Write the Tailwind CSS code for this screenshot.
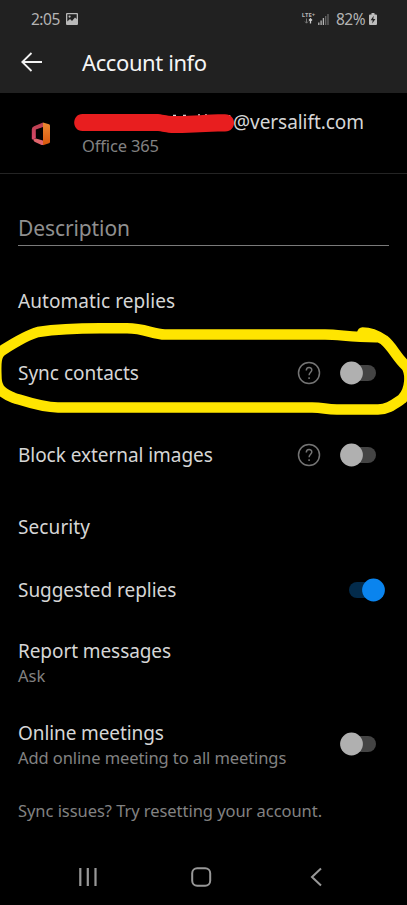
<!DOCTYPE html>
<html lang="en">
<head>
<meta charset="utf-8">
<title>Account info</title>
<script src="https://cdn.jsdelivr.net/npm/@tailwindcss/browser@4"></script>
</head>
<body class="bg-black">
<div class="relative flex h-[905px] w-[407px] flex-col overflow-hidden bg-black font-['Noto_Sans',sans-serif] text-[19px] leading-[26px] whitespace-nowrap text-[#d6d6d6]">
  <header class="h-[93px] shrink-0 bg-[#212121]">
    <div class="flex h-[37px] items-center pl-[31px] text-[15.5px] text-[#b4b4b4]">
      <span class="w-[35px] tracking-[-0.5px]">2:05</span>
      <svg class="h-[12px] w-[12px]" viewBox="0 0 12 12"><path fill="#b9b9b9" fill-rule="evenodd" d="M1 0h10q1 0 1 1v10q0 1-1 1H1q-1 0-1-1V1q0-1 1-1zM1.3 1.3v7.2L4 6l2 2 3-3.5 1.7 1.5V1.3z"/><circle cx="3.6" cy="3.6" r="1.1" fill="#b9b9b9"/></svg>
      <div class="ml-[223px] flex h-[13px] w-[15px] flex-col items-center">
        <span class="text-[6px] leading-[6px] font-bold">LTE+</span>
        <svg class="h-[6px] w-[9px]" viewBox="0 0 9 6" fill="none"><path d="M2.5 0.5v4.5M1 3.5l1.5 1.7L4 3.5" stroke="#777"/><path d="M6.5 5.5V1M5 2.5l1.5-1.7L8 2.5" stroke="#ccc" stroke-width="1.3"/></svg>
      </div>
      <svg class="ml-[2px] h-[12px] w-[11px]" viewBox="0 0 11 12"><path stroke="#b4b4b4" stroke-width="1.3" d="M.8 12V9.5M3.1 12V7.5M5.4 12V5"/><path stroke="#686868" stroke-width="1.3" d="M7.7 12V3M10 12V1"/></svg>
      <span class="ml-[7px] w-[33px] tracking-[-0.5px]">82%</span>
      <svg class="h-[12px] w-[8px]" viewBox="0 0 8 12"><path fill="#bdbdbd" d="M2.5 0h3v1.500H7q1 0 1 1V11q0 1-1 1H1q-1 0-1-1V2.500q0-1 1-1h1.500z"/><path fill="#212121" d="M4.700 2.800 1.600 7.300h2.100L3.200 10.500l3.200-4.600H4.300z"/></svg>
    </div>
    <div class="flex h-[50px] items-center pl-[21px]">
      <svg class="h-[20px] w-[22px]" viewBox="0 0 22 20" fill="none" stroke="#f2f2f2" stroke-width="1.800"><path d="M10.500 1 1.300 10l9.200 9M1.300 10H21"/></svg>
      <h1 class="ml-[39px] text-[22px] tracking-[-0.4px] text-[#f5f5f5]">Account info</h1>
    </div>
  </header>

  <section class="flex h-[81px] shrink-0 border-b border-[#242424] pt-[16px] pl-[31px]">
    <svg class="mt-[13px] h-[24px] w-[20px]" viewBox="0 0 20 24">
      <defs>
        <linearGradient id="a" x1="0" y1="0" x2="0" y2="1"><stop stop-color="#ec8a32"/><stop offset="1" stop-color="#d8560c"/></linearGradient>
        <linearGradient id="b" x1="0" y1="0" x2="0" y2="1"><stop stop-color="#b8404e"/><stop offset="1" stop-color="#d9486a"/></linearGradient>
      </defs>
      <path fill="url(#b)" d="M12 .5 3 4.200Q.8 5.200.8 7.500v9.200q0 1 1 .8l3-1.200V7.500L12 5z"/>
      <path fill="#e0646c" d="M2 17.600 4.800 16.500 12 18.500v4.400q-.6.300-1.500 0L3.500 19.800z"/>
      <path fill="url(#a)" d="m12 .5 6 1.800q1 .4 1 1.500v16q0 1.100-1 1.500l-6 2z"/>
    </svg>
    <div class="ml-[31px]">
      <div class="flex pl-[151px] tracking-[-0.05px]">@versalift.com</div>
      <div class="mt-[-1px] text-[16.500px] leading-[24px] tracking-[-0.15px] text-[#828282]">Office 365</div>
    </div>
  </section>

  <main class="flex grow flex-col px-[18px]">
    <div class="flex h-[72px] shrink-0 items-end border-b border-[#7a7a7a] pb-[4px] text-[21px] tracking-[-0.1px] text-[#8f8f8f]">Description</div>
    <div class="mt-[18px] flex h-[73px] shrink-0 items-center tracking-[0.07px]">Automatic replies</div>
    <div class="flex h-[72px] shrink-0 items-center">
      <span class="grow">Sync contacts</span>
      <svg class="h-[24px] w-[24px]" viewBox="0 0 24 24" fill="none" stroke="#747474" stroke-width="1.500"><circle cx="12" cy="12" r="10.500"/><path d="M9.300 9.500C9.300 5.500 14.800 5.700 14.800 9c0 2.200-2.700 2.300-2.700 5.200M12.100 16.300v1.800"/></svg>
      <svg class="mr-[12px] ml-[18px] h-[24px] w-[38px]" viewBox="0 0 38 24"><rect x="8" y="4" width="29" height="16" rx="8" fill="#444"/><circle cx="12.500" cy="12" r="11.400" fill="#b0b0b0"/></svg>
    </div>
    <div class="flex h-[91px] shrink-0 items-center">
      <span class="grow tracking-[-0.05px]">Block external images</span>
      <svg class="h-[24px] w-[24px]" viewBox="0 0 24 24" fill="none" stroke="#747474" stroke-width="1.500"><circle cx="12" cy="12" r="10.500"/><path d="M9.300 9.500C9.300 5.500 14.800 5.700 14.800 9c0 2.200-2.700 2.300-2.700 5.200M12.100 16.300v1.800"/></svg>
      <svg class="mr-[12px] ml-[18px] h-[24px] w-[38px]" viewBox="0 0 38 24"><rect x="8" y="4" width="29" height="16" rx="8" fill="#444"/><circle cx="12.500" cy="12" r="11.400" fill="#b0b0b0"/></svg>
    </div>
    <div class="flex h-[54px] shrink-0 items-center tracking-[0.1px]">Security</div>
    <div class="flex h-[72px] shrink-0 items-center">
      <span class="grow tracking-[-0.05px]">Suggested replies</span>
      <svg class="mr-[3px] h-[24px] w-[38px]" viewBox="0 0 38 24"><rect x="1" y="4" width="29" height="16" rx="8" fill="#032b4b"/><circle cx="25.500" cy="12" r="11.400" fill="#0a84ee"/></svg>
    </div>
    <div class="h-[76px] shrink-0 pt-[12px]">
      <div class="tracking-[-0.08px]">Report messages</div>
      <div class="text-[16.500px] leading-[24px] text-[#828282]">Ask</div>
    </div>
    <div class="flex h-[84px] shrink-0 items-center">
      <div class="grow pt-[2px]">
        <div class="tracking-[-0.1px]">Online meetings</div>
        <div class="text-[16.500px] leading-[24px] tracking-[-0.09px] text-[#828282]">Add online meeting to all meetings</div>
      </div>
      <svg class="mr-[12px] h-[24px] w-[38px] shrink-0" viewBox="0 0 38 24"><rect x="8" y="4" width="29" height="16" rx="8" fill="#444"/><circle cx="12.500" cy="12" r="11.400" fill="#b0b0b0"/></svg>
    </div>
    <div class="mt-[13px] text-[16.500px] leading-[24px] tracking-[-0.05px] text-[#828282]">Sync issues? Try resetting your account.</div>
  </main>

  <nav class="flex h-[56px] shrink-0 items-center pl-[78px]">
    <svg class="h-[20px] w-[20px]" viewBox="0 0 20 20"><path stroke="#989898" stroke-width="2.200" d="M2.300 1v18M9.800 1v18M17.500 1v18"/></svg>
    <svg class="ml-[93px] h-[20px] w-[21px]" viewBox="0 0 21 20"><rect x="1.200" y="1.200" width="18" height="17.600" rx="5" fill="none" stroke="#989898" stroke-width="2"/></svg>
    <svg class="ml-[98px] h-[20px] w-[12px]" viewBox="0 0 12 20"><path fill="none" stroke="#989898" stroke-width="2" d="M11 1.500 2 10l9 8.500"/></svg>
  </nav>

  <svg class="pointer-events-none absolute top-0 left-0 h-[430px] w-[407px]" viewBox="0 0 407 430" fill="none" stroke-linecap="round" stroke-linejoin="round">
    <path stroke="#d6d6d6" stroke-width="1.500" stroke-linecap="butt" d="M173 115.500h3M183 115.500h3M198 115h2M205 115h2M229.500 115v4"/>
    <path fill="#e81e1f" d="M82.500 114H155c9 0 9 2 20 2 20 0 30-1.800 50-1.800 12 0 12 17.300 0 17.300-20 0-30 1.500-50 1.500-11 0-11-2-20-2H82.500c-11 0-11-17 0-17z"/>
    <path stroke="#ffe500" stroke-width="10.500" d="M362.500 332.500C371 332.500 378 336 384 340 392 346 397 358 406 366 411 373 411 390 402 399 393 405 387 409.500 378 409.500H337C325 409.500 324 407.500 312 407.500H58C42 407.500 27 402 14 398 3 394-3 389-3.500 379-4 366-5 354 3 350 14 343 27 335 38 332 58 329 80 328.300 100 328.300H127C145 328.300 153 334.500 165 334.500H325C340 334.500 350 337.300 376 337.300"/>
  </svg>
</div>
</body>
</html>
